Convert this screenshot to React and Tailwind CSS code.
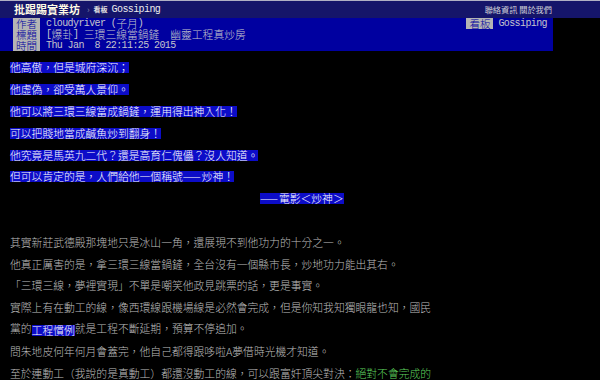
const MONO = "font-['Liberation_Mono',monospace] text-[10px] tracking-[-0.6px] font-normal";

function M({ children, className = "" }) {
  return <span className={`${MONO} ${className}`}>{children}</span>;
}

function Label({ children }) {
  return (
    <span className="h-[11px] w-[27px] bg-[#b4b4b4] text-[#0000a0] text-[10.5px] leading-[11px] flex items-center justify-center shrink-0">
      {children}
    </span>
  );
}

function MetaRow({ label, children, right }) {
  return (
    <div className="h-[11px] flex items-center justify-between pl-[13px] pr-[6px]">
      <div className="flex items-center h-[11px]">
        <Label>{label}</Label>
        <div className="ml-[6px] text-[#c4c4cc] text-[10.8px] leading-[11px] whitespace-nowrap flex items-center">
          {children}
        </div>
      </div>
      {right}
    </div>
  );
}

const HL = "inline-block bg-[#0c0cc8] text-white h-[11px] leading-[11px]";

function HLine({ children, className = "" }) {
  return (
    <div className="h-[21.8px] flex items-center whitespace-nowrap">
      <span className={`${HL} ${className}`}>{children}</span>
    </div>
  );
}

function Line({ children }) {
  return (
    <div className="h-[21.8px] flex items-center whitespace-nowrap text-[#bdbdbd]">
      <span className="leading-[11px]">{children}</span>
    </div>
  );
}

export default function App() {
  return (
    <div className="w-[600px] h-[380px] bg-black overflow-hidden font-['Noto_Sans_CJK_TC',sans-serif] font-light">
      {/* top bar */}
      <div className="h-[18px] bg-[#15156a] border-t border-[#b0b0c4] flex items-center">
        <div className="w-[553px] flex items-center justify-between pl-[14px] pr-[1px]">
          <div className="flex items-center">
            <span className="text-[11px] font-bold text-[#fffbe4] leading-none">批踢踢實業坊</span>
            <span className="text-[9px] text-[#9a9ab0] ml-[7px] leading-none">›</span>
            <span className="text-[7px] font-bold text-[#e0e0e0] ml-[4px] leading-none">看板</span>
            <M className="text-[#ececec] ml-[4px] leading-none">Gossiping</M>
          </div>
          <div className="text-[8.2px] text-[#d0d0d8] leading-none font-normal">聯絡資訊 關於我們</div>
        </div>
      </div>

      {/* meta */}
      <div className="w-[553px] bg-[#0000a0]">
        <MetaRow
          label="作者"
          right={
            <div className="flex items-center h-[11px]">
              <Label>看板</Label>
              <M className="ml-[5px] text-[#c4c4cc] leading-[11px]">Gossiping</M>
            </div>
          }
        >
          <M>cloudyriver (</M>
          <span>子月</span>
          <M>)</M>
        </MetaRow>
        <MetaRow label="標題">
          <M>[</M>
          <span>爆卦</span>
          <M>{"]\u00a0"}</M>
          <span>三環三線當鍋鏟</span>
          <M>{"\u00a0\u00a0"}</M>
          <span>幽靈工程真炒房</span>
        </MetaRow>
        <MetaRow label="時間">
          <M>{"Thu Jan \u00a08 22:11:25 2015"}</M>
        </MetaRow>
      </div>

      {/* body */}
      <div className="pl-[10px] pt-[6px] text-[10.8px]">
        <HLine>他高傲，但是城府深沉；</HLine>
        <HLine>他虛偽，卻受萬人景仰。</HLine>
        <HLine>他可以將三環三線當成鍋鏟，運用得出神入化！</HLine>
        <HLine>可以把賤地當成鹹魚炒到翻身！</HLine>
        <HLine>他究竟是馬英九二代？還是高育仁傀儡？沒人知道。</HLine>
        <HLine>但可以肯定的是，人們給他一個稱號<span className="tracking-[1px]">——</span>炒神！</HLine>
        <HLine className="ml-[250px]"><span className="tracking-[1px]">——</span>電影＜炒神＞</HLine>
        <div className="h-[21.8px]" />
        <Line>其實新莊武德殿那塊地只是冰山一角，還展現不到他功力的十分之一。</Line>
        <Line>他真正厲害的是，拿三環三線當鍋鏟，全台沒有一個縣市長，炒地功力能出其右。</Line>
        <Line>「三環三線，夢裡實現」不單是嘲笑他政見跳票的話，更是事實。</Line>
        <Line>實際上有在動工的線，像西環線跟機場線是必然會完成，但是你知我知獨眼龍也知，國民</Line>
        <Line>
          黨的<span className="inline-block h-[11px] leading-[11px] align-middle bg-[#0c0cc8] text-white">工程慣例</span>就是工程不斷延期，預算不停追加。
        </Line>
        <Line>問朱地皮何年何月會蓋完，他自己都得跟哆啦A夢借時光機才知道。</Line>
        <Line>
          至於連動工（我說的是真動工）都還沒動工的線，可以跟富奸頂尖對決：
          <span className="text-[#5fd35f]">絕對不會完成的</span>
        </Line>
      </div>
    </div>
  );
}
